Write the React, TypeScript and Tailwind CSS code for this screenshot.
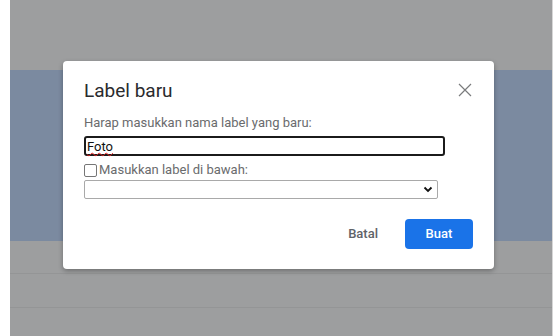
import React from 'react';

const font = { fontFamily: 'Roboto, "Liberation Sans", sans-serif' };

function CloseIcon() {
  return (
    <svg width="14" height="14" viewBox="0 0 14 14" className="text-[#7a7b7d]">
      <path d="M1 1 L13 13 M13 1 L1 13" stroke="currentColor" strokeWidth="1.2" fill="none" />
    </svg>
  );
}

function Chevron() {
  return (
    <svg width="10" height="7" viewBox="0 0 10 7">
      <path d="M1.5 1.5 L5 5 L8.5 1.5" stroke="#111" strokeWidth="1.8" fill="none" />
    </svg>
  );
}

export default function App() {
  return (
    <div className="relative w-[560px] h-[336px] flex bg-white overflow-hidden" style={font}>
      {/* page behind the overlay */}
      <div className="w-[10px] bg-white" />
      <div className="flex-1 flex flex-col bg-[#9d9e9f]">
        <div className="h-[70px]" />
        <div className="h-[171px] bg-[#7b8aa0]" />
        <div className="h-[33px] border-b border-[#949596]" />
        <div className="h-[34px] border-b border-[#949596]" />
        <div className="flex-1" />
      </div>
      <div className="w-[8px] bg-white border-l border-[#d6d6d6]" />

      {/* dialog */}
      <div className="absolute left-[63px] top-[61px] w-[431px] h-[208px] bg-white rounded-[4px] shadow-[0_2px_5px_rgba(0,0,0,0.3)] pl-[21px] pr-[21px] pt-[18px]">
        <div className="flex items-start justify-between">
          <h2 className="text-[19px] leading-[24px] text-[#2a2b2d]">Label baru</h2>
          <button className="mt-[4px] mr-[1px]">
            <CloseIcon />
          </button>
        </div>
        <p className="mt-[12px] text-[13px] leading-[16px] text-[#6a6b6d]">Harap masukkan nama label yang baru:</p>
        <div className="mt-[5px] w-[361px] h-[20px] border-2 border-[#1b1b1b] rounded-[3px] flex items-center px-[1px]">
          <span className="text-[13px] leading-[15px] text-[#111] underline decoration-wavy decoration-[#e02020] decoration-[1px] underline-offset-[1px]">
            Foto
          </span>
        </div>
        <label className="mt-[7px] flex items-center gap-[2px] text-[13px] leading-[14px] text-[#6a6b6d]">
          <span className="w-[13px] h-[13px] border border-[#767676] rounded-[2px] bg-white inline-block" />
          <span>Masukkan label di bawah:</span>
        </label>
        <div className="mt-[3px] w-[354px] h-[19px] border border-[#a9a9a9] rounded-[2px] flex items-center justify-end pr-[4px]">
          <Chevron />
        </div>
        <div className="mt-[20px] flex items-center justify-end gap-[27px]">
          <button className="text-[13px] font-medium text-[#5f6368]">Batal</button>
          <button className="w-[68px] h-[30px] rounded-[4px] bg-[#1a73e8] text-white text-[13px] font-medium">
            Buat
          </button>
        </div>
      </div>
    </div>
  );
}
